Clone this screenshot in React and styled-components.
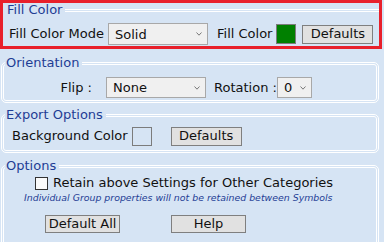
import React from 'react';
import styled, { createGlobalStyle } from 'styled-components';

const Global = createGlobalStyle`
  html, body { margin: 0; padding: 0; background: #d6e4f4; }
  body {
    font-family: "DejaVu Sans", "Liberation Sans", sans-serif;
    font-size: 13px;
    color: #111;
  }
  * { box-sizing: border-box; }
`;

const Page = styled.div`
  width: 384px;
  height: 242px;
  overflow: hidden;
  display: flex;
  flex-direction: column;
`;

const Highlight = styled.div`
  margin: 0 2px 0 0;
  border: 3px solid #e8202b;
  padding: 0 0 1px 0;
  display: flex;
  flex-direction: column;
`;

const TitleBar = styled.div`
  display: flex;
  align-items: center;
  height: 14px;
  padding-left: 4px;
`;

const TitleText = styled.span`
  color: #1f3d94;
  line-height: 14px;
  padding: 0 3px 0 0;
`;

const TitleLine = styled.span`
  flex: 1;
  border-top: 3px double #fff;
`;

const Group = styled.fieldset`
  margin: ${p => p.$top || 7}px 5px 0 1px;
  padding: 0 0 ${p => p.$bottom || 2}px 0;
  border: 3px double #fff;
  border-radius: 5px;
  min-width: 0;
`;

const Legend = styled.legend`
  color: #1f3d94;
  line-height: 14px;
  padding: 0 3px 0 1px;
  margin-left: 1px;
`;

const Row = styled.div`
  display: flex;
  align-items: center;
  height: ${p => p.$h || 20}px;
  margin-top: ${p => p.$mt || 0}px;
  padding-left: ${p => p.$pl || 0}px;
  gap: ${p => p.$gap || 0}px;
`;

const Label = styled.span`
  white-space: nowrap;
  line-height: 16px;
  ${p => p.$w ? `width: ${p.$w}px; text-align: right;` : ''}
  margin-right: ${p => p.$mr || 0}px;
`;

const SelectWrap = styled.span`
  position: relative;
  display: inline-flex;
  width: ${p => p.$w}px;
  height: ${p => p.$h || 20}px;
  margin-left: ${p => p.$ml || 0}px;
  margin-right: ${p => p.$mr || 0}px;
`;

const Select = styled.select`
  appearance: none;
  -webkit-appearance: none;
  width: 100%;
  height: 100%;
  margin: 0;
  padding: 0 0 0 6px;
  font: inherit;
  color: #111;
  background: #f0f0f0;
  border: 1px solid #a8a8a8;
  border-radius: 0;
  outline: none;
`;

const Chevron = styled.svg`
  position: absolute;
  right: 6px;
  top: 50%;
  margin-top: -2px;
  pointer-events: none;
`;

const Swatch = styled.span`
  display: inline-block;
  width: 20px;
  height: ${p => p.$h || 20}px;
  background: ${p => p.$color || 'transparent'};
  border: 1px solid #7c7c7c;
  margin-right: ${p => p.$mr || 0}px;
`;

const Button = styled.button`
  font: inherit;
  color: #111;
  width: ${p => p.$w}px;
  height: ${p => p.$h || 19}px;
  padding: 0;
  margin: 0;
  background: #e1e1e1;
  border: 1px solid #7f7f7f;
  border-radius: 0;
  line-height: 16px;
`;

const Check = styled.input`
  appearance: none;
  -webkit-appearance: none;
  width: 13px;
  height: 13px;
  margin: 0 5px 0 0;
  background: #fafafa;
  border: 1px solid #333;
  border-radius: 0;
`;

const Note = styled.div`
  font-style: italic;
  font-size: 9.4px;
  color: #1f3d94;
  line-height: 14px;
  padding-left: 20px;
  white-space: nowrap;
`;

const Dropdown = ({ w, h, value, options, mr, ml }) => (
  <SelectWrap $w={w} $h={h} $mr={mr} $ml={ml}>
    <Select defaultValue={value}>
      {options.map(o => <option key={o}>{o}</option>)}
    </Select>
    <Chevron width="6" height="4" viewBox="0 0 6 4">
      <path d="M0.5 0.5 L3 3.2 L5.5 0.5" fill="none" stroke="#777" strokeWidth="1" />
    </Chevron>
  </SelectWrap>
);

export default function App() {
  return (
    <>
      <Global />
      <Page>
        <Highlight>
          <TitleBar>
            <TitleText>Fill Color</TitleText>
            <TitleLine />
          </TitleBar>
          <Row $h={22} $mt={6} $pl={6}>
            <Label $mr={4}>Fill Color Mode</Label>
            <Dropdown w={100} h={22} value="Solid" options={['Solid', 'Gradient', 'None']} mr={9} />
            <Label $mr={4}>Fill Color</Label>
            <Swatch $color="#008000" $mr={6} />
            <Button $w={71}>Defaults</Button>
          </Row>
        </Highlight>

        <Group $top={7} $bottom={2}>
          <Legend>Orientation</Legend>
          <Row $h={21} $mt={7}>
            <Label $w={88} $mr={14}>Flip :</Label>
            <Dropdown w={100} h={21} value="None" options={['None', 'Horizontal', 'Vertical']} mr={8} />
            <Label>Rotation :</Label>
            <Dropdown w={35} h={21} value="0" options={['0', '90', '180', '270']} />
          </Row>
        </Group>

        <Group $top={5} $bottom={4}>
          <Legend>Export Options</Legend>
          <Row $h={20} $mt={4} $pl={8}>
            <Label $mr={4}>Background Color</Label>
            <Swatch $h={19} $mr={19} />
            <Button $w={71}>Defaults</Button>
          </Row>
        </Group>

        <Group $top={6} $bottom={20}>
          <Legend>Options</Legend>
          <Row $h={16} $mt={2} $pl={31}>
            <Check type="checkbox" />
            <Label>Retain above Settings for Other Categories</Label>
          </Row>
          <Note>Individual Group properties will not be retained between Symbols</Note>
          <Row $h={18} $mt={10} $pl={41} $gap={51}>
            <Button $w={75} $h={18}>Default All</Button>
            <Button $w={75} $h={18}>Help</Button>
          </Row>
        </Group>
      </Page>
    </>
  );
}
